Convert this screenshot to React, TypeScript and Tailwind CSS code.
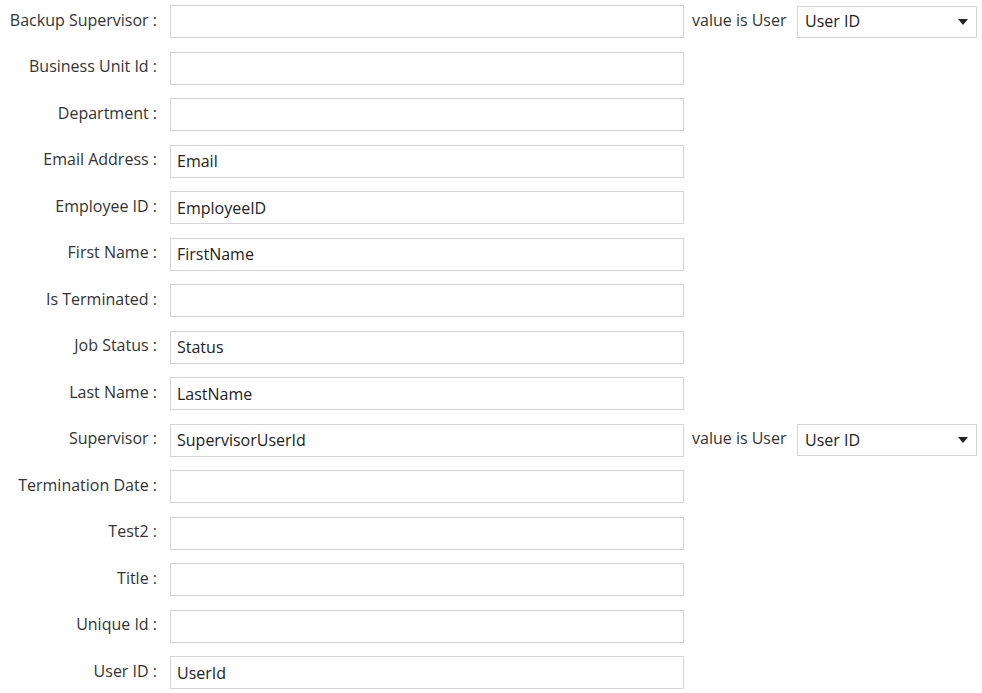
import React from "react";

type Row = { label: string; value: string; lookup?: boolean };

const rows: Row[] = [
  { label: "Backup Supervisor", value: "", lookup: true },
  { label: "Business Unit Id", value: "" },
  { label: "Department", value: "" },
  { label: "Email Address", value: "Email" },
  { label: "Employee ID", value: "EmployeeID" },
  { label: "First Name", value: "FirstName" },
  { label: "Is Terminated", value: "" },
  { label: "Job Status", value: "Status" },
  { label: "Last Name", value: "LastName" },
  { label: "Supervisor", value: "SupervisorUserId", lookup: true },
  { label: "Termination Date", value: "" },
  { label: "Test2", value: "" },
  { label: "Title", value: "" },
  { label: "Unique Id", value: "" },
  { label: "User ID", value: "UserId" },
];

const App = () => {
  return (
    <div className="w-[982px] h-[693px] bg-white overflow-hidden pt-[5px] font-['Open_Sans',sans-serif]">
      <div className="flex flex-col gap-[13.5px]">
        {rows.map((row) => (
          <div key={row.label} className="flex items-center h-[33px]">
            <label className="w-[170px] pr-[13px] text-right text-[16px] text-[#333] -mt-[4px] whitespace-nowrap">
              {row.label} :
            </label>
            <input
              readOnly
              value={row.value}
              className="w-[514px] h-[33px] border border-[#d4d4d4] bg-white px-[6px] text-[16px] text-[#222] outline-none"
            />
            {row.lookup && (
              <div className="flex items-center">
                <span className="ml-[8px] w-[105px] text-[16px] text-[#333] -mt-[4px] whitespace-nowrap">
                  value is User
                </span>
                <div className="flex items-center justify-between w-[180px] h-[32px] border border-[#d4d4d4] px-[7px] text-[16px] text-[#222]">
                  <span className="-mt-[1px]">User ID</span>
                  <svg width="10" height="6" viewBox="0 0 10 6" className="mr-[1px]">
                    <path d="M0 0 L10 0 L5 6 Z" fill="#222" />
                  </svg>
                </div>
              </div>
            )}
          </div>
        ))}
      </div>
    </div>
  );
};

export default App;
